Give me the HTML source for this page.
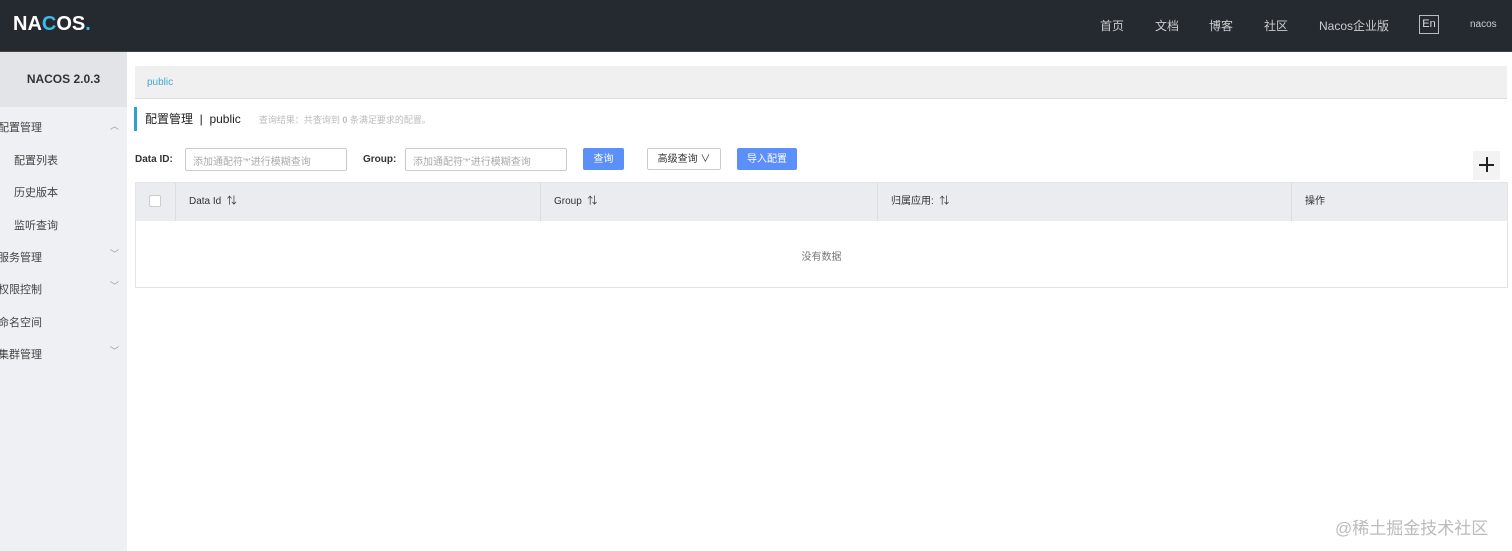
<!DOCTYPE html>
<html><head><meta charset="utf-8"><style>
*{box-sizing:border-box;margin:0;padding:0}
body{width:1512px;height:551px;overflow:hidden;background:#fff;font-family:"Liberation Sans","Noto Sans CJK SC",sans-serif;color:#333;position:relative}
.hd{position:absolute;left:0;top:0;width:1512px;height:52px;background:#252a31;border-bottom:1px solid #444}
.logo{position:absolute;left:13px;top:13px;font-size:20px;font-weight:bold;color:#fff;letter-spacing:0px}
.logo b{color:#3fb9e8}
.nav{position:absolute;top:17px;font-size:12px;color:#ccc}
.en{position:absolute;left:1419px;top:15px;width:20px;height:19px;border:1px solid #bbb;color:#ddd;font-size:11px;text-align:center;line-height:17px}
.sb{position:absolute;left:0;top:52px;width:127px;height:499px;background:#eef0f3}
.sbt{height:55px;background:#e2e4e8;font-weight:bold;font-size:12px;text-align:center;line-height:55px;color:#333}
.it{position:absolute;font-size:11px;color:#444}
.ar{position:absolute;left:110px;font-size:9px;color:#999}
.bc{position:absolute;left:135px;top:66px;width:1372px;height:33px;background:#f0f0f0;border-bottom:1px solid #ddd;font-size:10px;color:#3fa8d0;padding:11px 12px}
.tt{position:absolute;left:134px;top:107px;height:24px;border-left:3px solid #2ea3c9;padding-left:8px;font-size:12px;line-height:24px;color:#222}
.tt small{font-size:9px;color:#bbb;margin-left:18px}
.lb{position:absolute;top:154px;font-size:10px;font-weight:bold;color:#333}
.in{position:absolute;top:148px;height:23px;border:1px solid #ccc;border-radius:2px;font-size:10px;color:#aaa;padding:4px 7px}
.bt{position:absolute;top:148px;height:22px;background:#5b8ff9;color:#fff;font-size:10px;text-align:center;line-height:22px;border-radius:2px}
.tb{position:absolute;left:135px;top:182px;width:1373px;height:106px;border:1px solid #e3e3e3}
.th{height:38px;background:#ebecf0;position:relative;font-size:10px;color:#333}
.th div{position:absolute;top:0;height:38px;line-height:38px;border-right:1px solid #ddd}
.cb{position:absolute;left:13px;top:12px;width:12px;height:12px;background:#fff;border:1px solid #ccc;border-radius:2px}
</style></head><body>
<div class="hd">
<div class="logo">NA<b>C</b>OS<b>.</b></div>
<span class="nav" style="left:1100px">首页</span>
<span class="nav" style="left:1155px">文档</span>
<span class="nav" style="left:1209px">博客</span>
<span class="nav" style="left:1264px">社区</span>
<span class="nav" style="left:1319px">Nacos企业版</span>
<div class="en">En</div>
<span class="nav" style="left:1470px;font-size:10px;top:19px">nacos</span>
</div>
<div class="sb"><div class="sbt">NACOS 2.0.3</div></div>
<span class="it" style="left:-2px;top:119px">配置管理</span><span class="ar" style="top:119px">︿</span>
<span class="it" style="left:14px;top:152px">配置列表</span>
<span class="it" style="left:14px;top:184px">历史版本</span>
<span class="it" style="left:14px;top:217px">监听查询</span>
<span class="it" style="left:-2px;top:249px">服务管理</span><span class="ar" style="top:247px">﹀</span>
<span class="it" style="left:-2px;top:281px">权限控制</span><span class="ar" style="top:279px">﹀</span>
<span class="it" style="left:-2px;top:314px">命名空间</span>
<span class="it" style="left:-2px;top:346px">集群管理</span><span class="ar" style="top:344px">﹀</span>
<div class="bc">public</div>
<div class="tt">配置管理 &nbsp;|&nbsp; public<small>查询结果：共查询到 <b>0</b> 条满足要求的配置。</small></div>
<span class="lb" style="left:135px">Data ID:</span>
<div class="in" style="left:185px;width:162px">添加通配符'*'进行模糊查询</div>
<span class="lb" style="left:363px">Group:</span>
<div class="in" style="left:405px;width:162px">添加通配符'*'进行模糊查询</div>
<div class="bt" style="left:583px;width:41px;line-height:24px">查询</div>
<div class="bt" style="left:647px;width:74px;background:#fff;color:#333;border:1px solid #ccc">高级查询 ∨</div>
<div class="bt" style="left:737px;width:60px;line-height:24px">导入配置</div>
<div style="position:absolute;left:1473px;top:151px;width:27px;height:29px;background:#f3f3f3"><div style="position:absolute;left:6px;top:13px;width:15px;height:1.5px;background:#222"></div><div style="position:absolute;left:13px;top:6px;width:1.5px;height:15px;background:#222"></div></div>
<div class="tb"><div class="th">
<div style="left:0;width:40px"><span class="cb"></span></div>
<div style="left:40px;width:365px;padding-left:13px">Data Id &nbsp;⇅</div>
<div style="left:405px;width:337px;padding-left:13px">Group &nbsp;⇅</div>
<div style="left:742px;width:414px;padding-left:13px">归属应用: &nbsp;⇅</div>
<div style="left:1156px;width:216px;padding-left:13px;border:0">操作</div>
</div>
<div style="text-align:center;font-size:10px;color:#777;margin-top:27px">没有数据</div></div>
<div style="position:absolute;left:1335px;top:514px;font-size:17px;color:#bbb">@稀土掘金技术社区</div>
</body></html>
